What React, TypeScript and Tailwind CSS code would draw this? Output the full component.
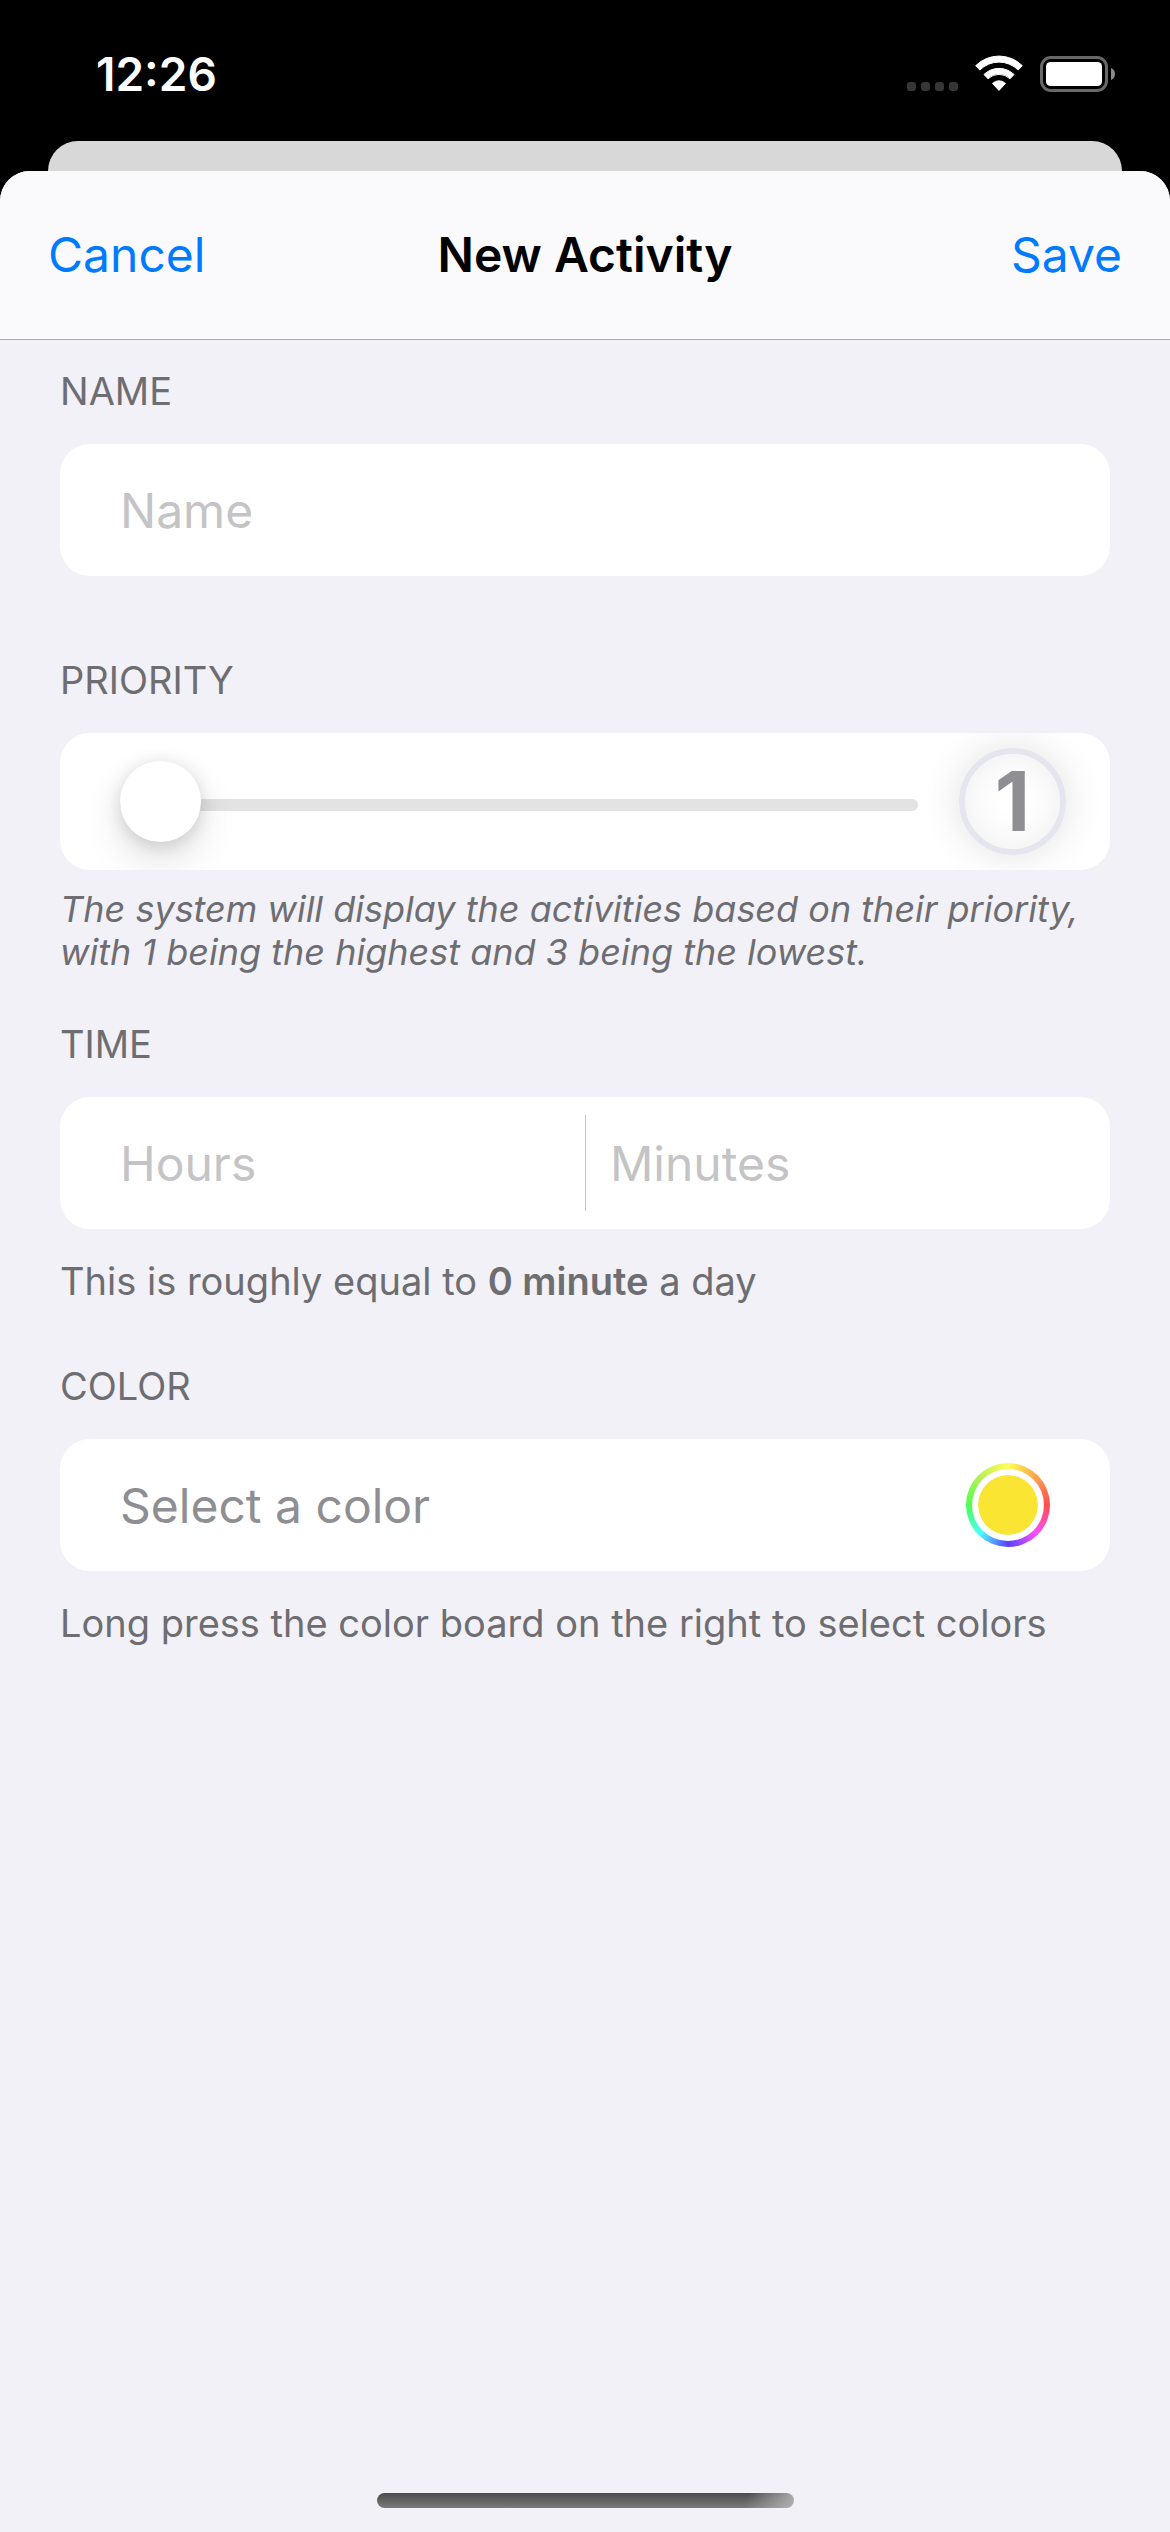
import { useState } from "react";
import type { ReactNode } from "react";

function StatusBar() {
  return (
    <div className="flex h-[141px] items-start justify-between pr-[54px] pl-24 pt-[46px]">
      <time className="text-[46px] leading-[56px] font-semibold text-white">12:26</time>
      <div className="flex items-end gap-[17px] pt-[9px]">
        <div className="flex gap-[5px] pb-px">
          {[0, 1, 2, 3].map((dot) => (
            <span key={dot} className="size-[9px] rounded-[3px] bg-[#363636]" />
          ))}
        </div>
        <svg width="48" height="37" viewBox="0 0 48 37" fill="#fff" stroke="#fff" strokeWidth="1" strokeLinejoin="round" aria-label="Wi-Fi">
          <path d="M0.7 10.7A33 33 0 0 1 47.3 10.7L43.2 15A27.3 27.3 0 0 0 4.8 15Z" />
          <path d="M9 19.5A21.4 21.4 0 0 1 39 19.5L35 23.8A15.8 15.8 0 0 0 13 23.8Z" />
          <path d="M17.5 28.4A9.4 9.4 0 0 1 30.5 28.4L24 35.4Z" />
        </svg>
        <svg width="76" height="36" viewBox="0 0 76 36" aria-label="Battery full">
          <rect x="1.5" y="1.5" width="65" height="33" rx="9.5" fill="none" stroke="#686868" strokeWidth="3" />
          <rect x="6" y="6" width="56" height="24" rx="4.5" fill="#fff" />
          <path d="M71 12C74 13 75 15.500 75 18C75 20.500 74 23 71 24Z" fill="#8a8a8a" />
        </svg>
      </div>
    </div>
  );
}

function Section({ title, htmlFor, children }: { title: string; htmlFor: string; children: ReactNode }) {
  return (
    <section>
      <label htmlFor={htmlFor} className="mb-[29px] block text-[38px] leading-[48px] uppercase">
        {title}
      </label>
      {children}
    </section>
  );
}

const fieldClass =
  "w-full min-w-0 bg-transparent pt-0.5 text-[48px] text-black outline-none placeholder:text-[#c4c4c6] placeholder:opacity-100";

export default function App() {
  const [priority, setPriority] = useState(1);
  const [color, setColor] = useState("#f9e532");

  return (
    <div className="flex min-h-screen flex-col bg-black font-['Inter',sans-serif]">
      <StatusBar />
      <div className="mx-12 h-[30px] rounded-t-[30px] bg-[#d8d8d8]" />
      <main className="flex grow flex-col rounded-t-[30px] bg-[#f2f1f7] text-[#6d6d72]">
        <header className="grid h-[169px] grid-cols-[1fr_auto_1fr] items-center rounded-t-[30px] border-b border-[#a9a9ad] bg-[#fafafc] px-12 text-[48px]">
          <button type="button" className="justify-self-start text-[#007aff]">Cancel</button>
          <h1 className="font-semibold text-black">New Activity</h1>
          <button type="button" className="justify-self-end text-[#007aff]">Save</button>
        </header>

        <form className="flex flex-col px-[60px] pt-[27px]">
          <Section title="Name" htmlFor="name">
            <div className="mb-20 flex h-[132px] rounded-[30px] bg-white px-[60px]">
              <input id="name" type="text" placeholder="Name" className={fieldClass} />
            </div>
          </Section>

          <Section title="Priority" htmlFor="priority">
            <div className="flex items-center gap-[41px] overflow-hidden rounded-[30px] bg-white py-[15px] pr-11 pl-[60px]">
              <input
                id="priority"
                type="range"
                min={1}
                max={3}
                value={priority}
                onChange={(e) => setPriority(Number(e.target.value))}
                className="h-[84px] min-w-0 grow appearance-none bg-transparent pt-1.5 outline-none [&::-webkit-slider-runnable-track]:h-3 [&::-webkit-slider-runnable-track]:rounded-full [&::-webkit-slider-runnable-track]:bg-[#e3e3e4] [&::-webkit-slider-thumb]:-mt-[38px] [&::-webkit-slider-thumb]:size-[81px] [&::-webkit-slider-thumb]:appearance-none [&::-webkit-slider-thumb]:rounded-full [&::-webkit-slider-thumb]:bg-white [&::-webkit-slider-thumb]:shadow-[0_18px_39px_rgba(0,0,0,0.12),0_3px_18px_rgba(0,0,0,0.14)]"
              />
              <output
                htmlFor="priority"
                className="flex size-[107px] shrink-0 items-center justify-center rounded-full border-[6px] border-[#e5e5ef] text-[82px] leading-none font-bold text-[#8e8e93] shadow-[0_0_39px_rgba(0,0,0,0.12),inset_0_0_36px_rgba(0,0,0,0.07)]"
              >
                {priority}
              </output>
            </div>
            <p className="mt-[18px] mb-[46px] text-[36px] leading-[43px] italic">
              The system will display the activities based on their priority, with 1 being the highest and 3 being the lowest.
            </p>
          </Section>

          <Section title="Time" htmlFor="hours">
            <div className="grid h-[132px] grid-cols-2 items-center rounded-[30px] bg-white px-[60px]">
              <input id="hours" type="text" inputMode="numeric" placeholder="Hours" className={fieldClass} />
              <div className="flex h-24 border-l border-[#c6c6c8] pl-6">
                <input type="text" inputMode="numeric" aria-label="Minutes" placeholder="Minutes" className={fieldClass} />
              </div>
            </div>
            <p className="mt-7 mb-[57px] text-[38px] leading-[48px]">
              This is roughly equal to <strong className="font-semibold">0 minute</strong> a day
            </p>
          </Section>

          <Section title="Color" htmlFor="color">
            <div className="flex h-[132px] items-center justify-between rounded-[30px] bg-white px-[60px]">
              <span className="pt-0.5 text-[48px] text-[#8e8e93]">Select a color</span>
              <span className="flex size-[84px] rounded-full bg-[conic-gradient(#ffff55,#ffa04d_12.5%,#ff4d4d_25%,#ff4dff_37.5%,#5a40ff_50%,#4dffff_62.5%,#4dff4d_75%,#b8f055_87.5%,#ffff55)] p-1.5">
                <span className="flex size-full rounded-full bg-white p-1.5">
                  <input
                    id="color"
                    type="color"
                    value={color}
                    onChange={(e) => setColor(e.target.value)}
                    className="size-full appearance-none rounded-full bg-transparent p-0 [&::-webkit-color-swatch]:rounded-full [&::-webkit-color-swatch]:border-0 [&::-webkit-color-swatch-wrapper]:p-0"
                  />
                </span>
              </span>
            </div>
            <p className="mt-7 text-[38px] leading-[48px]">Long press the color board on the right to select colors</p>
          </Section>
        </form>

        <div className="mx-auto mt-auto mb-6 h-[15px] w-[417px] rounded-full bg-[linear-gradient(110deg,transparent_88%,#b0b0b0),linear-gradient(#4c4c4d,#7a7a7b)]" />
      </main>
    </div>
  );
}
